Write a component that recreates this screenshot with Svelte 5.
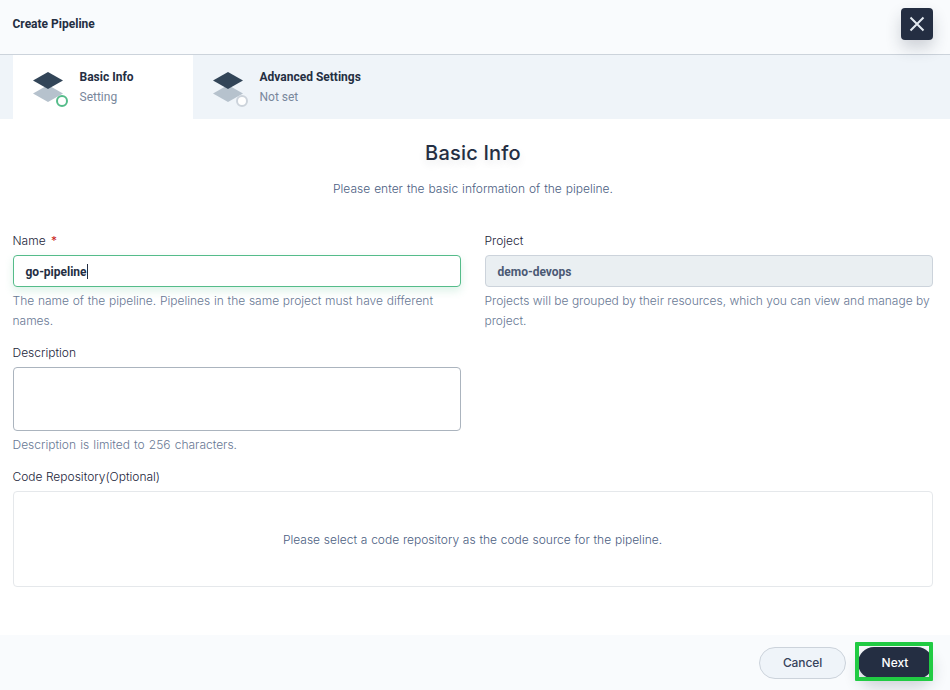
<script>
  const steps = [
    { title: 'Basic Info', state: 'Setting', current: true },
    { title: 'Advanced Settings', state: 'Not set', current: false }
  ];
</script>

<div class="modal">
  <header>
    <h1>Create Pipeline</h1>
    <button class="close" aria-label="Close">
      <svg width="16" height="16" viewBox="0 0 16 16"><path d="M1.500 1.500 14.500 14.500M14.500 1.500 1.500 14.500" stroke="#e3e9ef" stroke-width="2" stroke-linecap="butt" /></svg>
    </button>
  </header>
  <nav>
    {#each steps as step}
      <div class="step" class:current={step.current}>
        <svg class="layers" width="40" height="40" viewBox="0 0 40 40">
          <path d="M5 26.500 20 18l15 8.500L20 35Z" fill="#b6c2cd" />
          <path d="M5 13.500 20 5l15 8.500L20 22Z" fill="#324558" />
          <circle cx="34" cy="34" r="5" fill="#fff" stroke={step.current ? '#55bc8a' : '#ccd3db'} stroke-width="2" />
        </svg>
        <div class="step-text">
          <strong>{step.title}</strong>
          <span>{step.state}</span>
        </div>
      </div>
    {/each}
  </nav>
  <main>
    <h2>Basic Info</h2>
    <p class="subtitle">Please enter the basic information of the pipeline.</p>
    <div class="columns">
      <div class="field">
        <div class="label">Name <i>*</i></div>
        <div class="input focused">go-pipeline<span class="caret"></span></div>
        <p class="help name-help">The name of the pipeline. Pipelines in the same project must have different names.</p>
      </div>
      <div class="field">
        <div class="label">Project</div>
        <div class="input disabled">demo-devops</div>
        <p class="help">Projects will be grouped by their resources, which you can view and manage by project.</p>
      </div>
    </div>
    <div class="field half">
      <div class="label">Description</div>
      <div class="input area"></div>
      <p class="help desc-help">Description is limited to 256 characters.</p>
    </div>
    <div class="field">
      <div class="label">Code Repository(Optional)</div>
      <div class="empty">Please select a code repository as the code source for the pipeline.</div>
    </div>
  </main>
  <footer>
    <button class="cancel">Cancel</button>
    <div class="next-wrap">
      <button class="next">Next</button>
      <span class="highlight"></span>
    </div>
  </footer>
</div>

<style>
  :global(body) { background: #fff; }
  .modal, .modal * { box-sizing: border-box; }
  .modal {
    width: 950px;
    height: 690px;
    overflow: hidden;
    display: flex;
    flex-direction: column;
    font: 400 12px/20px Roboto, sans-serif;
    color: #242e42;
  }
  h1, h2, p { margin: 0; }
  button { font: inherit; padding: 0; }
  header {
    height: 55px;
    flex: none;
    display: flex;
    justify-content: space-between;
    align-items: flex-start;
    padding: 8px 17px 0 12.500px;
    background: #f9fbfd;
    border-bottom: 1px solid #ccd3db;
  }
  h1 { font-size: 12px; font-weight: 700; line-height: 32px; }
  .close {
    position: relative;
    width: 32px;
    height: 32px;
    display: flex;
    align-items: center;
    justify-content: center;
    border: 0;
    border-radius: 4px;
    background: #242e42;
    box-shadow: 0 8px 16px rgba(36, 46, 66, 0.2);
  }
  nav { height: 64px; flex: none; display: flex; padding-left: 13px; background: #eff4f9; }
  .step { width: 180px; display: flex; padding: 12px 0 0 15px; }
  .step.current { background: #fff; }
  .step:not(.current) { width: 200px; }
  .layers { flex: none; margin-right: 11.500px; overflow: visible; }
  .step-text { display: flex; flex-direction: column; white-space: nowrap; }
  .step-text span { color: #79879c; }
  main { flex: 1; padding: 20px 17px 0 13px; }
  h2 {
    font: 500 20px/28px Inter, sans-serif;
    letter-spacing: 0.2px;
    text-align: center;
    text-shadow: 0 4px 8px rgba(36, 46, 66, 0.1);
  }
  .subtitle, .help, .empty, .label { font-family: Inter, sans-serif; font-weight: 300; }
  .subtitle { margin-top: 12px; text-align: center; color: #4c6082; word-spacing: 0.6px; }
  .columns { display: grid; grid-template-columns: 448px 448px; gap: 24px; margin-top: 32px; }
  .label { margin-bottom: 4px; margin-left: -0.500px; color: #1b243a; }
  .label i { margin-left: 2px; font-style: normal; font-weight: 400; color: #ca2621; }
  .input {
    height: 32px;
    display: flex;
    align-items: center;
    padding: 2px 12px 0 11.500px;
    border: 1px solid #abb4be;
    border-radius: 4px;
    font-weight: 700;
  }
  .focused { border-color: #55bc8a; box-shadow: 0 4px 8px rgba(85, 188, 138, 0.2); }
  .disabled { background: #eaeff2; border-color: #ccd3db; color: #4a5974; }
  .caret { width: 1px; height: 15px; margin-top: -2px; background: #242e42; }
  .area { height: 64px; }
  .half { width: 448px; margin-top: 12px; }
  .help { margin: 4px 0 0 -0.500px; color: #687894; }
  .name-help { word-spacing: 0.35px; }
  .desc-help { word-spacing: 0.8px; }
  .half + .field { margin-top: 12px; }
  .empty {
    height: 96px;
    display: flex;
    align-items: center;
    justify-content: center;
    padding: 1px 1px 0 0;
    border: 1px solid #e5e8eb;
    border-radius: 4px;
    color: #4c6082;
    word-spacing: 0.4px;
  }
  footer {
    height: 55px;
    flex: none;
    display: flex;
    justify-content: flex-end;
    gap: 12px;
    padding: 12px 18px 0;
    background: #f9fbfd;
  }
  footer button { height: 32px; border-radius: 16px; font-family: Inter, sans-serif; font-weight: 500; }
  .cancel { width: 87px; border: 1px solid #ccd3db; background: #eff4f9; color: #36435c; letter-spacing: -0.1px; }
  .next-wrap { position: relative; width: 74px; }
  .next { width: 75px; padding-right: 1px; border: 0; background: #242e42; color: #fff; box-shadow: 0 8px 16px rgba(36, 46, 66, 0.2); }
  .highlight { position: absolute; inset: -5px -0.500px auto -3px; height: 39px; border: 4px solid #21cb43; border-radius: 1px; }
</style>
